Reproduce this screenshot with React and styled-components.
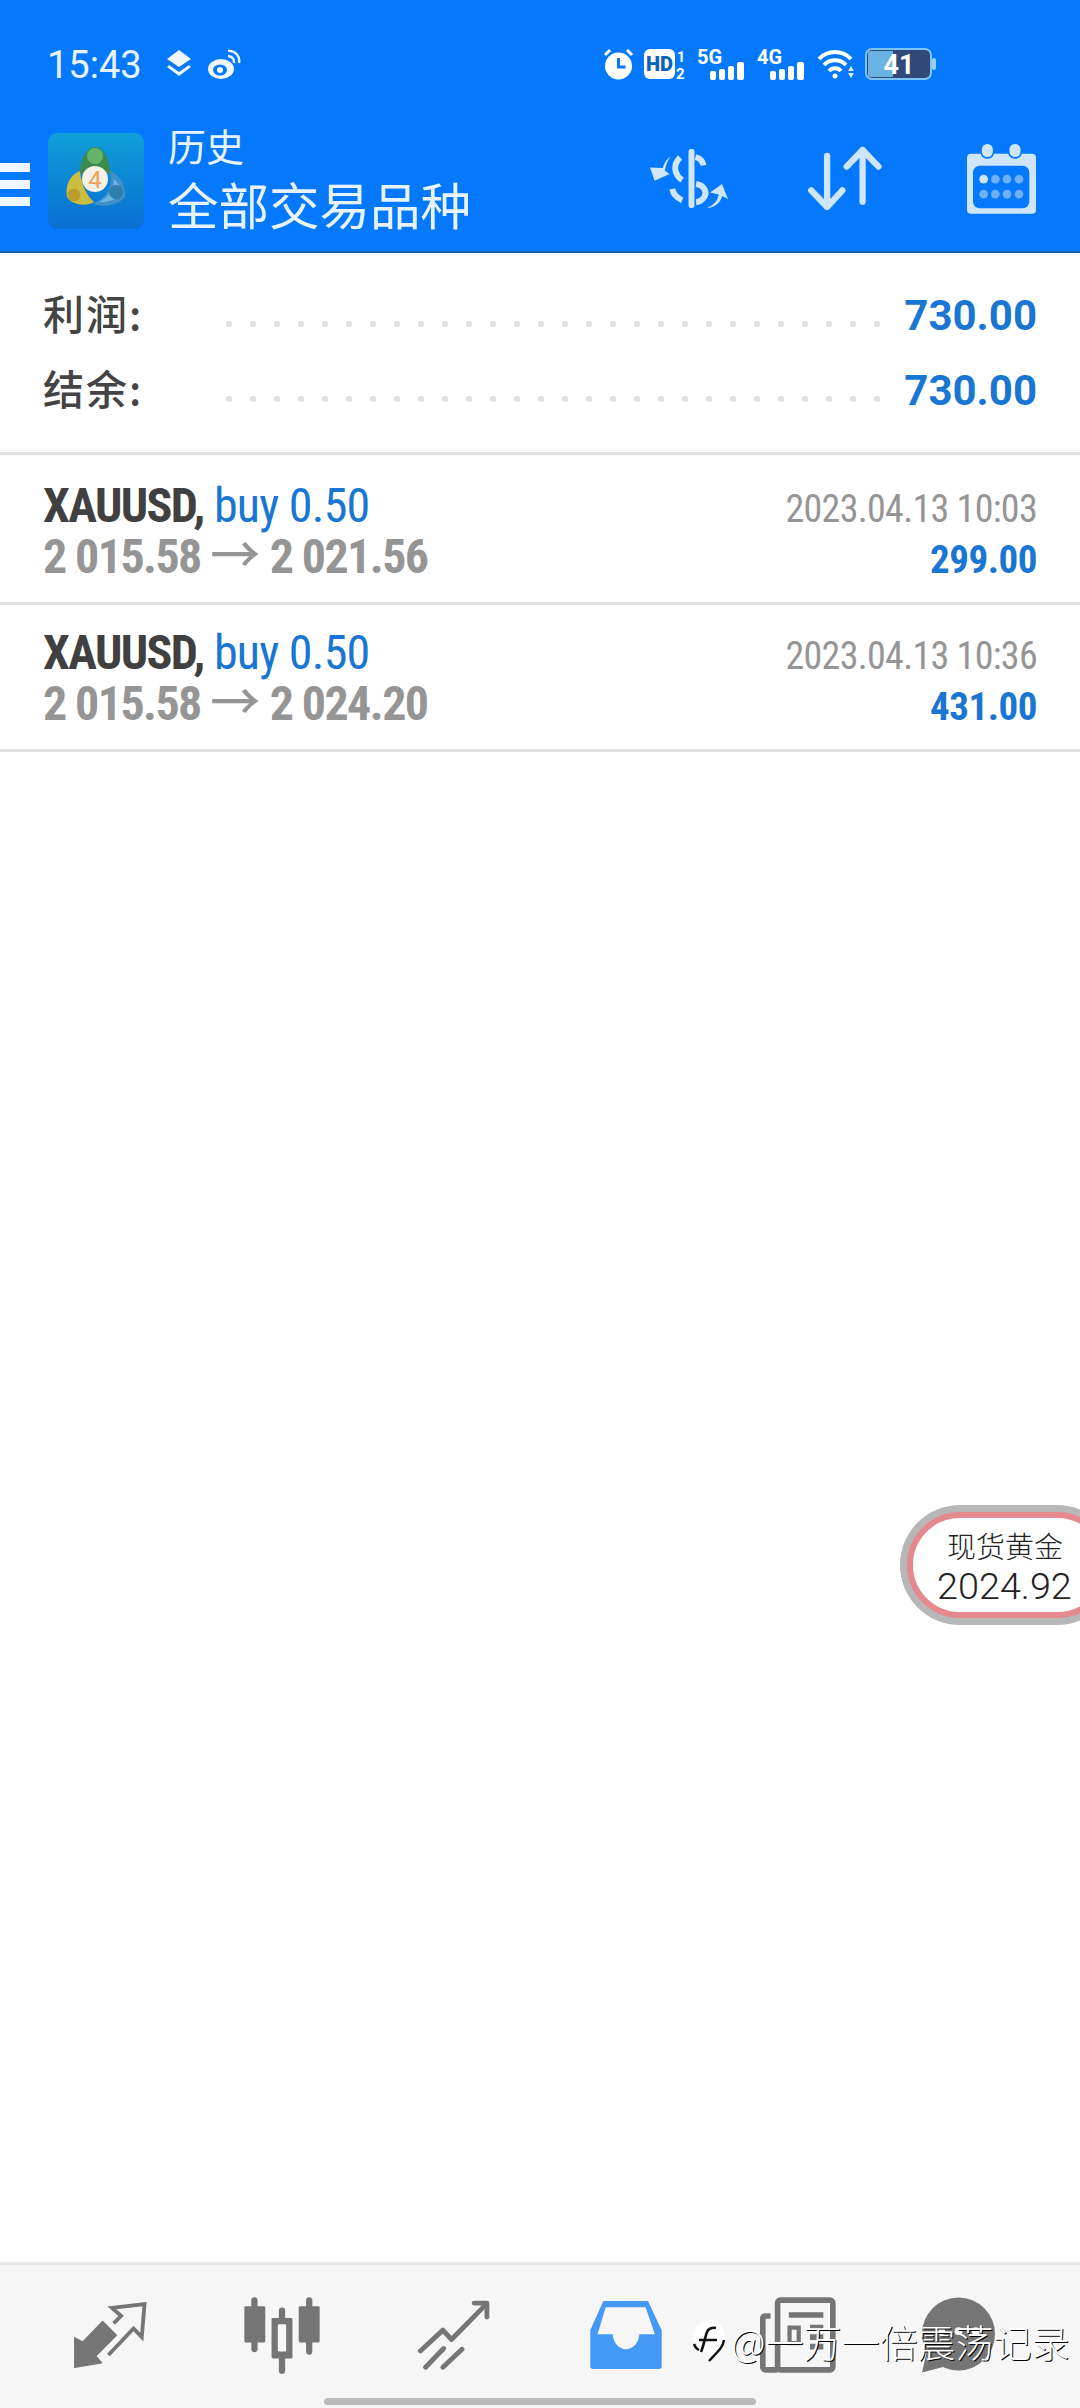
import React from "react"
import styled, { createGlobalStyle } from "styled-components"

const GlobalStyle = createGlobalStyle`
  html, body {
    margin: 0;
    padding: 0;
    background: #fff;
    font-family: Roboto, "Noto Sans CJK SC", sans-serif;
  }
  * {
    box-sizing: border-box;
  }
`

const Page = styled.div`
  position: relative;
  width: 1080px;
  height: 2408px;
  display: flex;
  flex-direction: column;
  overflow: hidden;
  background: #fff;
`

const TopBlock = styled.div`
  background: #0479fe;
  border-bottom: 2px solid #0b63c0;
`

const StatusBar = styled.div`
  height: 118px;
  padding: 10px 0 0 47px;
  display: flex;
  align-items: center;
  color: #e8f3ff;
`

const Clock = styled.span`
  font-size: 38px;
  line-height: 1;
  margin: 2px 24px 0 0;
`

const StatusIcons = styled.div`
  margin-left: auto;
  margin-right: 143px;
  display: flex;
  align-items: center;
  gap: 10px;
`

const Header = styled.div`
  height: 133px;
  display: flex;
  align-items: center;
`

const Burger = styled.div`
  width: 30px;
  height: 43px;
  margin-right: 18px;
  display: flex;
  flex-direction: column;
  justify-content: space-between;

  i {
    display: block;
    height: 9px;
    background: #eef6ff;
  }
`

const LogoBox = styled.div`
  height: 96px;
  margin-bottom: 8px;
`

const Titles = styled.div`
  margin: 0 0 11px 24px;
  color: #e8f3ff;
  font-family: "Noto Sans CJK SC", sans-serif;
  font-weight: 400;
`

const Small = styled.div`
  font-size: 38px;
  line-height: 40px;
  margin-bottom: 7px;
`

const Large = styled.div`
  font-size: 50.5px;
  line-height: 62px;
`

const Actions = styled.div`
  margin-left: auto;
  padding: 0 44px 12px 0;
  display: flex;
  align-items: center;
  gap: 79px;
`

const Summary = styled.div`
  height: 202px;
  padding-top: 25px;
  border-bottom: 3px solid #e2e2e2;
`

const SummaryRow = styled.div`
  height: 75px;
  padding: 0 43px;
  display: flex;
  align-items: center;
`

const SummaryLabel = styled.span`
  width: 183px;
  margin-top: -8px;
  font-family: "Noto Sans CJK SC", sans-serif;
  font-weight: 500;
  font-size: 41px;
  letter-spacing: 2px;
  color: #444;
`

const Leader = styled.span`
  flex: 1;
  height: 6px;
  margin: 16px 22px 0 0;
  background: radial-gradient(circle at 3px 3px, #e2e2e2 3px, transparent 3.5px) 0 0 / 24px 6px repeat-x;
`

const SummaryValue = styled.span`
  font-size: 42px;
  font-weight: 700;
  color: #1976d2;
  line-height: 1;
`

const Deal = styled.div`
  height: ${p => p.$h}px;
  padding: 0 43px 20px;
  display: flex;
  justify-content: space-between;
  align-items: flex-end;
  border-bottom: 3px solid #e2e2e2;
  font-family: "Roboto Condensed", "Liberation Sans Narrow", Roboto, sans-serif;
  font-stretch: 75%;
`

const DealLeft = styled.div`
  display: flex;
  flex-direction: column;
`

const DealRight = styled.div`
  margin-bottom: -3px;
  display: flex;
  flex-direction: column;
  align-items: flex-end;
`

const Line = styled.div`
  height: 50.5px;
  font-size: ${p => p.$size}px;
  letter-spacing: ${p => p.$track}px;
  line-height: 50.5px;
  font-weight: ${p => (p.$bold ? 700 : 400)};
  color: ${p => p.$color};
  white-space: pre;

  b {
    color: #404040;
    font-weight: 700;
    letter-spacing: -1.6px;
  }
`

const Arrow = styled.span`
  font-family: "Noto Sans CJK SC", sans-serif;
  font-size: 50px;
  font-weight: 500;
  line-height: 0;
  letter-spacing: 0;
`

const Spacer = styled.div`
  flex: 1;
`

const Pill = styled.div`
  position: absolute;
  top: 1512px;
  right: -30px;
  width: 203px;
  height: 106px;
  padding: 8px 0 0 24px;
  border: 6px solid #e6898f;
  border-radius: 54px;
  box-shadow: 0 0 0 7px #b7b7b7;
  background: #fff;
  color: #222;
  display: flex;
  flex-direction: column;
`

const PillName = styled.span`
  margin-left: 10px;
  font-family: "Noto Sans CJK SC", sans-serif;
  font-weight: 300;
  font-size: 29px;
  line-height: 39px;
`

const PillPrice = styled.span`
  font-size: 37.8px;
  font-weight: 300;
  line-height: 42px;
`

const NavBar = styled.nav`
  height: 146px;
  padding: 30px 0 0 24px;
  background: #f6f6f6;
  border-top: 3px solid #e8e8e8;
  display: flex;
  align-items: flex-start;
`

const NavItem = styled.div`
  width: ${p => p.$w || 172}px;
  height: 80px;
  display: flex;
  align-items: center;
  justify-content: center;
`

const Handle = styled.div`
  position: absolute;
  left: 324px;
  bottom: 3px;
  width: 432px;
  height: 7px;
  border-radius: 4px;
  background: #bbb;
`

const Watermark = styled.div`
  position: absolute;
  left: 691px;
  top: 2316px;
  display: flex;
  align-items: center;
  gap: 4px;
  color: #fff;
  font-family: "Noto Sans CJK SC", sans-serif;
  font-weight: 300;
  font-size: 38px;
  line-height: 50px;
  white-space: nowrap;
  text-shadow: 1px 1px 0 #000;
`

function LayersIcon() {
  return (
    <svg width="26" height="30" viewBox="0 0 26 30" fill="#eef6ff">
      <path d="M13 1 25 10 13 18 1 10Z" />
      <path d="M3 16 13 23 23 16 25 18 13 27 1 18Z" />
    </svg>
  )
}

function WeiboIcon() {
  return (
    <svg width="34" height="32" viewBox="0 0 34 32" style={{ marginLeft: 15 }}>
      <ellipse cx="14" cy="21" rx="13" ry="10" fill="#eef6ff" />
      <ellipse cx="13" cy="22" rx="7" ry="5.5" fill="#0479fe" />
      <circle cx="13" cy="22" r="3" fill="#eef6ff" />
      <path d="M21 3a10 10 0 0 1 11 12M21 8a6 6 0 0 1 6 7" fill="none" stroke="#eef6ff" strokeWidth="2.4" />
    </svg>
  )
}

function AlarmIcon() {
  return (
    <svg width="31" height="32" viewBox="0 0 31 32">
      <circle cx="15.5" cy="18" r="13.5" fill="#fff" />
      <path d="M15.5 10v9h7" fill="none" stroke="#0479fe" strokeWidth="3" />
      <path d="M2 7 7 2M29 7 24 2" stroke="#fff" strokeWidth="3" />
    </svg>
  )
}

function HdIcon() {
  return (
    <svg width="43" height="32" viewBox="0 0 43 32">
      <rect x="0" y="1" width="31" height="30" rx="6" fill="#fff" />
      <text x="15.5" y="23" textAnchor="middle" fontFamily="Roboto" fontWeight="900" fontSize="20" fill="#0b63c0">HD</text>
      <text x="33" y="14" fontFamily="Roboto" fontWeight="700" fontSize="14" fill="#fff">1</text>
      <text x="32" y="31" fontFamily="Roboto" fontWeight="700" fontSize="15" fill="#fff">2</text>
    </svg>
  )
}

function SignalIcon({ label }) {
  return (
    <svg width="50" height="32" viewBox="0 0 50 32">
      <text x="0" y="16" fontFamily="Roboto" fontWeight="700" fontSize="20" fill="#fff">{label}</text>
      <rect x="13" y="23" width="6" height="9" rx="2" fill="#fff" />
      <rect x="22" y="21" width="6" height="11" rx="2" fill="#fff" />
      <rect x="31" y="18" width="6" height="14" rx="2" fill="#fff" />
      <rect x="40" y="14" width="7" height="18" rx="2" fill="#fff" />
    </svg>
  )
}

function WifiIcon() {
  return (
    <svg width="38" height="30" viewBox="0 0 38 30" fill="none" stroke="#fff" strokeWidth="4">
      <path d="M2 10a22 22 0 0 1 32 0" />
      <path d="M7 16a15 15 0 0 1 22 0" />
      <path d="M12 22a8 8 0 0 1 12 0" />
      <circle cx="18" cy="27" r="2.5" fill="#fff" stroke="none" />
      <path d="M34 17l3 5h-6zM31 24h6l-3 5z" fill="#dcecff" stroke="none" />
    </svg>
  )
}

function BatteryIcon() {
  return (
    <svg width="72" height="32" viewBox="0 0 72 32">
      <rect x="1" y="1" width="65" height="30" rx="6" fill="#2f4a78" stroke="#7cc4f2" strokeWidth="2" />
      <path d="M5 3H28V29H5a2 2 0 0 1-2-2V5a2 2 0 0 1 2-2Z" fill="#69b4e2" />
      <rect x="67" y="10" width="4" height="12" rx="2" fill="#9fd0f2" />
      <text x="34" y="26" textAnchor="middle" fontFamily="Roboto" fontWeight="700" fontSize="27" fill="#fff">41</text>
    </svg>
  )
}

function AppLogo() {
  return (
    <svg width="96" height="96" viewBox="0 0 96 96">
      <defs>
        <linearGradient id="logoBg" x1="0" y1="0" x2="0" y2="1">
          <stop offset="0" stopColor="#0f9fd8" />
          <stop offset="1" stopColor="#0a6ed2" />
        </linearGradient>
      </defs>
      <rect width="96" height="96" rx="9" fill="url(#logoBg)" />
      <path d="M47 14C37 15 33 27 31 41c5-2 11-1 16 2 5-3 11-4 16-2-2-14-6-26-16-27Z" fill="#3b8a4e" />
      <circle cx="47" cy="23" r="8" fill="#66b46c" />
      <path d="M32 38C22 42 17 52 19 64c5 8 19 10 27 5-8-7-13-19-14-31Z" fill="#cdbd3e" />
      <circle cx="26" cy="62" r="6.5" fill="#b89e2e" />
      <path d="M62 38c10 4 16 14 15 26-7 9-25 11-33 6 14-2 22-18 18-32Z" fill="#3f8fca" />
      <path d="M66 46c5 4 7 10 6 16-6 6-15 8-21 7 9-4 15-13 15-23Z" fill="#6db4e0" />
      <circle cx="68" cy="59" r="7" fill="#2f7fae" />
      <circle cx="47" cy="46" r="13" fill="#f6f0e6" />
      <text x="47" y="55" textAnchor="middle" fontFamily="Roboto" fontSize="24" fill="#eba35a">4</text>
    </svg>
  )
}

function DollarIcon() {
  return (
    <svg width="79" height="59" viewBox="30 55 238 177" fill="none" stroke="#cfe5fb" strokeWidth="18">
      <path d="M158 63V224" strokeLinecap="round" />
      <path d="M194 104c-2-14-12-22-24-25M124 80c-22 20-20 50 6 68M172 160c26 4 34 26 24 40-5 8-13 14-24 15M100 175c3 15 14 27 30 34" />
      <path d="M95 77C84 84 74 98 72 112L33 110 47 150 92 130 78 120C80 104 86 90 95 77Z" fill="#cfe5fb" stroke="none" />
      <path d="M205 232C224 226 238 208 240 192L214 186 250 160 268 205 250 196C246 216 226 232 205 232Z" fill="#cfe5fb" stroke="none" />
    </svg>
  )
}

function SortIcon() {
  return (
    <svg width="81" height="65" viewBox="505 50 243 196" fill="none" stroke="#cfe5fb" strokeWidth="19" strokeLinecap="round" strokeLinejoin="round">
      <path d="M565 80V232M517 184 565 234 611 184" />
      <path d="M672 62V218M624 112 672 62 720 112" />
    </svg>
  )
}

function CalendarIcon() {
  return (
    <svg width="69" height="71" viewBox="985 40 207 212">
      <rect x="985" y="72" width="207" height="180" rx="12" fill="#cfe5fb" />
      <rect x="1003" y="108" width="169" height="127" rx="20" fill="#0479fe" />
      <rect x="1027" y="40" width="38" height="44" rx="18" fill="#cfe5fb" stroke="#0479fe" strokeWidth="5" />
      <rect x="1110" y="40" width="38" height="44" rx="18" fill="#cfe5fb" stroke="#0479fe" strokeWidth="5" />
      <circle cx="1035" cy="148" r="13" fill="#cfe5fb" />
      {[1070, 1105, 1141].map(x => (
        <circle key={x} cx={x} cy="148" r="13" fill="#6fb0f8" />
      ))}
      {[1035, 1070, 1105, 1141].map(x => (
        <circle key={x} cx={x} cy="193" r="13" fill="#6fb0f8" />
      ))}
    </svg>
  )
}

function ExchangeIcon() {
  return (
    <svg width="75" height="66" viewBox="215 188 212 192">
      <path d="M217 378 217 292 240 305 298 245 338 285 278 345 295 365Z" fill="#757575" stroke="#757575" strokeWidth="4" strokeLinejoin="round" />
      <path d="M330 250 352 228 325 205 420 194 412 290 388 265 315 342" fill="none" stroke="#757575" strokeWidth="11" />
    </svg>
  )
}

function CandleIcon() {
  return (
    <svg width="76" height="77" viewBox="708 172 218 220" fill="#757575">
      <rect x="729" y="172" width="18" height="158" rx="9" />
      <rect x="709" y="198" width="60" height="104" rx="4" />
      <rect x="808" y="202" width="18" height="190" rx="9" />
      <rect x="787" y="232" width="60" height="116" rx="4" />
      <rect x="805" y="250" width="24" height="78" rx="3" fill="#f6f6f6" />
      <rect x="886" y="172" width="18" height="165" rx="9" />
      <rect x="865" y="198" width="60" height="104" rx="4" />
    </svg>
  )
}

function TrendIcon() {
  return (
    <svg width="74" height="70" viewBox="1212 178 210 202" fill="none" stroke="#757575" strokeWidth="14" strokeLinecap="round" strokeLinejoin="round">
      <path d="M1220 325 1285 265 1310 292 1410 190" />
      <path d="M1375 187H1412V227" />
      <path d="M1235 372 1287 318M1285 372 1340 320" />
    </svg>
  )
}

function InboxIcon() {
  return (
    <svg width="74" height="68" viewBox="147 180 208 198">
      <path d="M185 180H315L355 265V370a8 8 0 0 1-8 8H155a8 8 0 0 1-8-8V265Z" fill="#4499f5" />
      <path d="M192 198H308L335 277H290C285 335 217 335 212 277H168Z" fill="#f6f6f6" />
    </svg>
  )
}

function NewsIcon() {
  return (
    <svg width="76" height="76" viewBox="648 172 216 214" fill="none" stroke="#757575" strokeWidth="16">
      <rect x="698" y="180" width="157" height="198" rx="8" />
      <path d="M678 225H662a6 6 0 0 0-6 6V370a8 8 0 0 0 8 8H698" />
      <path d="M730 222H828M790 258H828M790 285H828M790 312H828" />
      <rect x="732" y="258" width="26" height="44" strokeWidth="12" />
    </svg>
  )
}

function ChatIcon() {
  return (
    <svg width="73" height="76" viewBox="1110 172 208 214" fill="#757575">
      <circle cx="1214" cy="276" r="104" />
      <path d="M1110 386 1125 320 1170 370Z" />
      <circle cx="1165" cy="268" r="11" fill="#f6f6f6" />
      <circle cx="1214" cy="268" r="11" fill="#f6f6f6" />
      <circle cx="1263" cy="268" r="11" fill="#f6f6f6" />
    </svg>
  )
}

function ZhihuMark() {
  return (
    <svg width="36" height="46" viewBox="0 0 36 46">
      <path d="M18 2c9 0 16 7 16 16 0 8-4 14-11 20l-7 6 1-8C7 35 2 27 2 18 2 9 9 2 18 2Z" fill="#fff" />
      <path d="M33 22c-1 8-8 13-15 21M3 26c1 3 3 5 5 6" fill="none" stroke="#111" strokeWidth="2.4" />
      <path d="M10 34c3-7 4-15 6-20 1-3 5-5 9-4M8 22h18" fill="none" stroke="#111" strokeWidth="2.6" />
    </svg>
  )
}

const deals = [
  { id: 1, h: 150, close: "2 021.56", time: "2023.04.13 10:03", profit: "299.00" },
  { id: 2, h: 147, close: "2 024.20", time: "2023.04.13 10:36", profit: "431.00" },
]

export default function App() {
  return (
    <Page>
      <GlobalStyle />
      <TopBlock>
        <StatusBar>
          <Clock>15:43</Clock>
          <LayersIcon />
          <WeiboIcon />
          <StatusIcons>
            <AlarmIcon />
            <HdIcon />
            <SignalIcon label="5G" />
            <SignalIcon label="4G" />
            <WifiIcon />
            <BatteryIcon />
          </StatusIcons>
        </StatusBar>
        <Header>
          <Burger>
            <i />
            <i />
            <i />
          </Burger>
          <LogoBox>
            <AppLogo />
          </LogoBox>
          <Titles>
            <Small>历史</Small>
            <Large>全部交易品种</Large>
          </Titles>
          <Actions>
            <DollarIcon />
            <SortIcon />
            <CalendarIcon />
          </Actions>
        </Header>
      </TopBlock>

      <Summary>
        <SummaryRow>
          <SummaryLabel>利润:</SummaryLabel>
          <Leader />
          <SummaryValue>730.00</SummaryValue>
        </SummaryRow>
        <SummaryRow>
          <SummaryLabel>结余:</SummaryLabel>
          <Leader />
          <SummaryValue>730.00</SummaryValue>
        </SummaryRow>
      </Summary>

      {deals.map(deal => (
        <Deal key={deal.id} $h={deal.h}>
          <DealLeft>
            <Line $size={48} $track={-0.75} $color="#1976d2">
              <b>XAUUSD,</b> buy 0.50
            </Line>
            <Line $size={48} $track={-1.6} $bold $color="#959595">
              2 015.58 <Arrow>→</Arrow> {deal.close}
            </Line>
          </DealLeft>
          <DealRight>
            <Line $size={38} $track={-0.7} $color="#959595">{deal.time}</Line>
            <Line $size={39} $track={-0.5} $bold $color="#1976d2">{deal.profit}</Line>
          </DealRight>
        </Deal>
      ))}

      <Spacer />

      <NavBar>
        <NavItem><ExchangeIcon /></NavItem>
        <NavItem><CandleIcon /></NavItem>
        <NavItem><TrendIcon /></NavItem>
        <NavItem><InboxIcon /></NavItem>
        <NavItem><NewsIcon /></NavItem>
        <NavItem $w={148}><ChatIcon /></NavItem>
      </NavBar>

      <Pill>
        <PillName>现货黄金</PillName>
        <PillPrice>2024.92</PillPrice>
      </Pill>
      <Handle />
      <Watermark>
        <ZhihuMark />
        <span>@一万一倍震荡记录</span>
      </Watermark>
    </Page>
  )
}
